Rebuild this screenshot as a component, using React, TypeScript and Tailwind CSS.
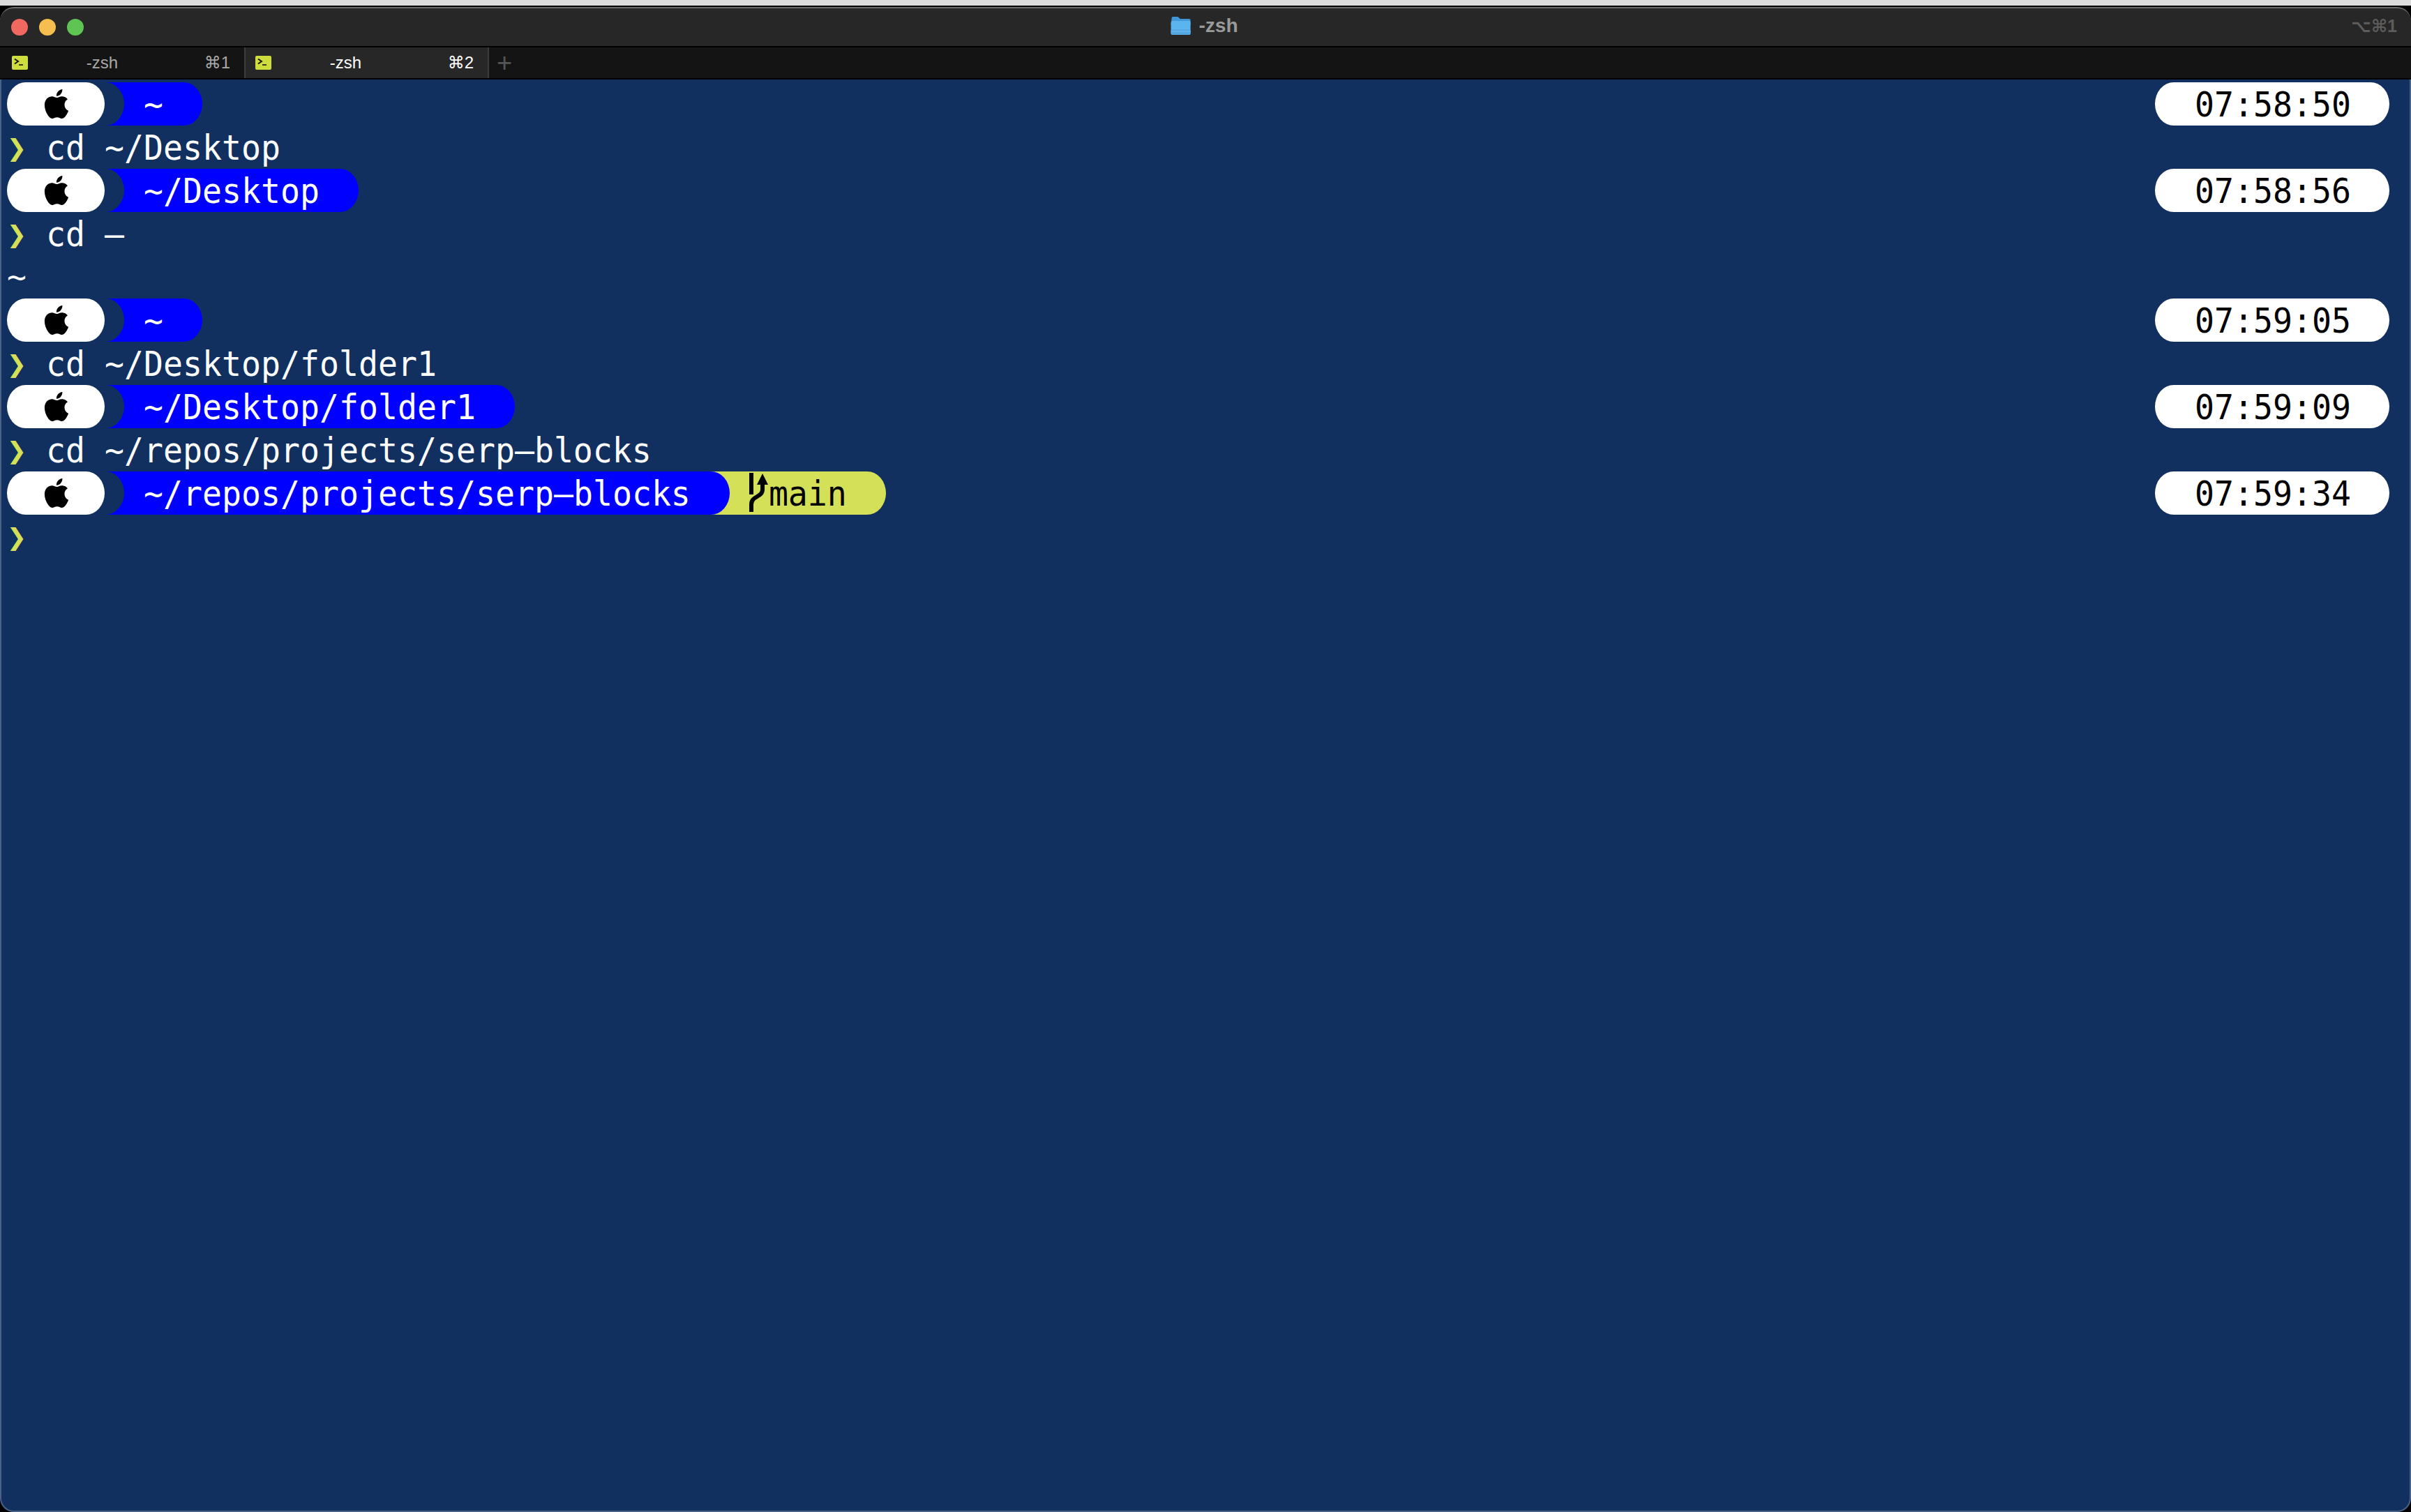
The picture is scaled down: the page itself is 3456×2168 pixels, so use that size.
import { SiApple } from 'react-icons/si'

const TabIcon = () => (
  <svg width="23" height="20" viewBox="0 0 23 20" className="shrink-0">
    <rect width="23" height="20" rx="2" fill="#cfdc3e" />
    <path d="M4 4.5 L9 8 L4 11.5" fill="none" stroke="#15170a" strokeWidth="2" />
    <path d="M10 13 H16" stroke="#15170a" strokeWidth="1.6" />
  </svg>
)

const FolderIcon = () => (
  <svg width="29" height="27" viewBox="0 0 28 27" className="shrink-0">
    <path d="M1 2 Q1 0 3 0 H9 Q11 0 12 2 L13 3 H26 Q28 3 28 5 V12 H0 Z" fill="#3f97da" />
    <rect x="0" y="6" width="28" height="20" rx="2" fill="#5cb4ee" />
    <rect x="0" y="18" width="28" height="8" rx="2" fill="#54a8e2" />
    <path d="M0 21 H28" stroke="#6dbcf0" strokeWidth="1" />
  </svg>
)

const BranchIcon = () => (
  <svg width="28" height="62" viewBox="0 0 28 62" className="shrink-0">
    <rect x="0" y="2" width="6" height="31" fill="#000" />
    <path d="M19 3 L27 19 H11 Z" fill="#000" />
    <path d="M19 18 V26 C19 37 3 35 3 47 V58" fill="none" stroke="#000" strokeWidth="6" />
  </svg>
)

const AppleSegment = () => (
  <div className="flex h-full w-[140px] items-center justify-center rounded-[27px/31px] bg-white text-black">
    <SiApple size={42} className="translate-x-[1px]" />
  </div>
)

// blue path segment with a concave left edge
const Prompt = ({ path, branch }: { path: string; branch?: string }) => (
  <div className="flex h-[62px]">
    <AppleSegment />
    <div className={`flex h-full bg-[#0000ff] text-white ${branch ? '' : 'rounded-r-[27px_31px]'}`}>
      <div className="h-full w-[28px] rounded-r-[27px_31px] bg-[#11305f]" />
      <span className={`block translate-y-[1px] scale-y-[1.06] pl-[28px] whitespace-pre ${branch ? 'pr-[28px]' : 'pr-[56px]'}`}>{path}</span>
    </div>
    {branch && (
      <div className="flex h-full items-center rounded-r-[27px_31px] bg-[#d4e058] text-black">
        <div className="mr-[28px] h-full w-[28px] rounded-r-[27px_31px] bg-[#0000ff]" />
        <BranchIcon />
        <span className="block translate-y-[1px] scale-y-[1.06] pr-[56px]">{branch}</span>
      </div>
    )}
  </div>
)

const Time = ({ value }: { value: string }) => (
  <div className="h-[62px] w-[336px] rounded-[27px/31px] bg-white text-center text-black">
    <span className="block translate-x-[1px] translate-y-[1px] scale-y-[1.06]">{value}</span>
  </div>
)

const PromptRow = ({ path, time, branch }: { path: string; time: string; branch?: string }) => (
  <div className="flex h-[62px] justify-between">
    <Prompt path={path} branch={branch} />
    <Time value={time} />
  </div>
)

const Command = ({ text }: { text?: string }) => (
  <div className="flex h-[62px] text-white">
    <span className="block w-[56px] translate-y-[1px] text-[#d4e058]">❯</span>
    <span className="block translate-y-[1px] scale-y-[1.06] whitespace-pre">{text}</span>
  </div>
)

const Tab = ({ hotkey, active }: { hotkey: string; active?: boolean }) => (
  <div
    className={`flex h-full items-center pr-[20px] text-[24px] ${
      active
        ? 'w-[351px] border-x-2 border-[#3c3c3c] bg-[#272727] pl-[14px] text-white'
        : 'w-[350px] pl-[17px] text-[#a8a8a8]'
    }`}
  >
    <TabIcon />
    <span className="flex-1 pr-[40px] text-center">-zsh</span>
    <span>{hotkey}</span>
  </div>
)

export default function App() {
  return (
    <div className="flex h-[2168px] w-[3456px] flex-col overflow-hidden bg-black font-['Liberation_Sans','DejaVu_Sans',sans-serif]">
      <div className="h-[8px] shrink-0 bg-[#dcdcdc]" />
      <div className="mt-[2px] flex min-h-0 flex-1 flex-col">
        {/* title bar */}
        <div className="grid h-[56px] shrink-0 grid-cols-3 items-center rounded-t-[20px] border-t-2 border-[#6a6a6a] bg-[#272727] pl-[16px] pr-[20px]">
          <div className="flex gap-[16px]">
            <div className="h-[24px] w-[24px] rounded-full bg-[#f0685f]" />
            <div className="h-[24px] w-[24px] rounded-full bg-[#f6bd4f]" />
            <div className="h-[24px] w-[24px] rounded-full bg-[#5ec453]" />
          </div>
          <div className="flex -translate-y-[2px] items-center justify-center gap-[12px] text-[28px] font-bold text-[#9a9a9a]">
            <FolderIcon />
            -zsh
          </div>
          <div className="-translate-y-[2px] text-right text-[25px] font-bold leading-none text-[#5c5c5c]">⌥⌘1</div>
        </div>
        {/* tab bar */}
        <div className="mt-[2px] flex h-[44px] shrink-0 items-center bg-[#141414]">
          <Tab hotkey="⌘1" />
          <Tab hotkey="⌘2" active />
          <div className="pl-[11px] text-[38px] font-light leading-none text-[#555555]">+</div>
        </div>
        {/* terminal */}
        <div className="mt-[2px] min-h-0 flex-1 rounded-b-[20px] border-x-2 border-b-2 border-[#4b6287] bg-[#11305f] pl-[8px] pr-[29px] pt-[4px] font-['DejaVu_Sans_Mono',monospace] text-[46.5px] leading-[62px]">
          <PromptRow path="~" time="07:58:50" />
          <Command text="cd ~/Desktop" />
          <PromptRow path="~/Desktop" time="07:58:56" />
          <Command text="cd –" />
          <div className="h-[62px] text-white">~</div>
          <PromptRow path="~" time="07:59:05" />
          <Command text="cd ~/Desktop/folder1" />
          <PromptRow path="~/Desktop/folder1" time="07:59:09" />
          <Command text="cd ~/repos/projects/serp–blocks" />
          <PromptRow path="~/repos/projects/serp–blocks" time="07:59:34" branch="main" />
          <Command />
        </div>
      </div>
    </div>
  )
}
